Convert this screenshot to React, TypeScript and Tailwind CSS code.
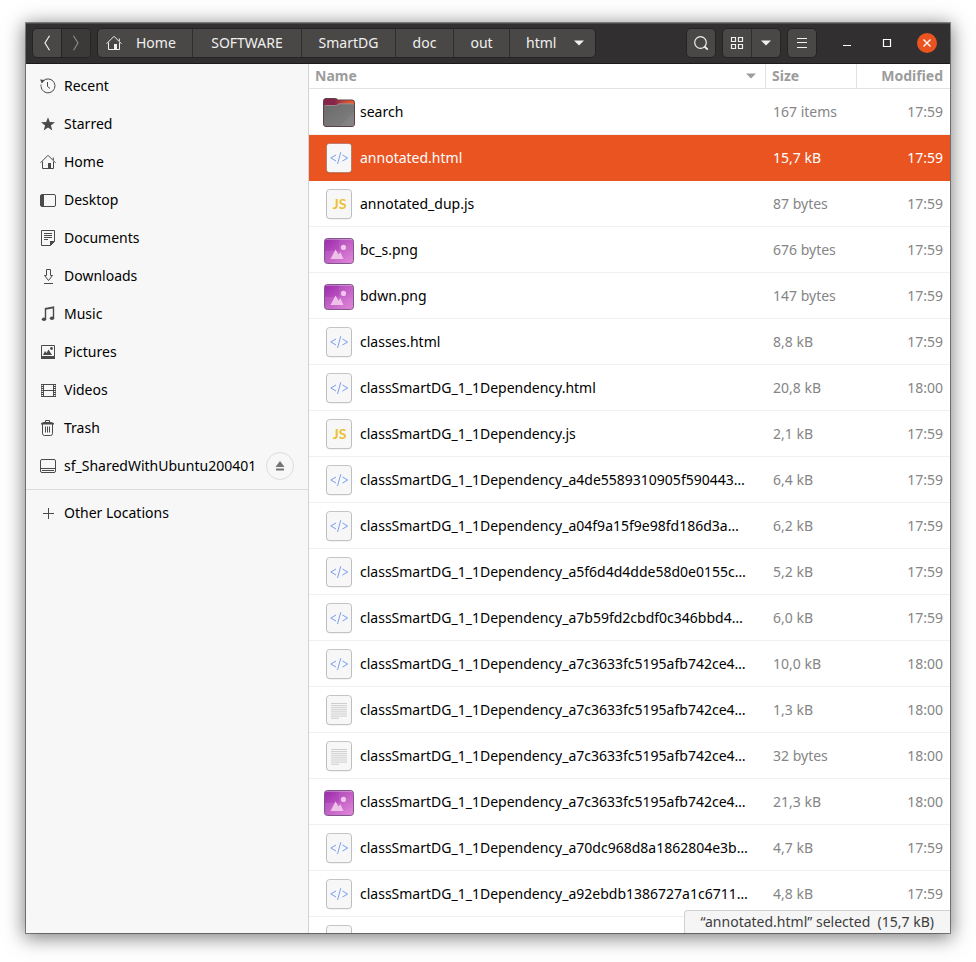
import React from "react";

type Kind = "folder" | "html" | "js" | "image" | "text";

interface FileEntry {
  name: string;
  kind: Kind;
  size: string;
  modified: string;
}

const files: FileEntry[] = [
  { name: "search", kind: "folder", size: "167 items", modified: "17:59" },
  { name: "annotated.html", kind: "html", size: "15,7 kB", modified: "17:59" },
  { name: "annotated_dup.js", kind: "js", size: "87 bytes", modified: "17:59" },
  { name: "bc_s.png", kind: "image", size: "676 bytes", modified: "17:59" },
  { name: "bdwn.png", kind: "image", size: "147 bytes", modified: "17:59" },
  { name: "classes.html", kind: "html", size: "8,8 kB", modified: "17:59" },
  { name: "classSmartDG_1_1Dependency.html", kind: "html", size: "20,8 kB", modified: "18:00" },
  { name: "classSmartDG_1_1Dependency.js", kind: "js", size: "2,1 kB", modified: "17:59" },
  { name: "classSmartDG_1_1Dependency_a4de5589310905f590443…", kind: "html", size: "6,4 kB", modified: "17:59" },
  { name: "classSmartDG_1_1Dependency_a04f9a15f9e98fd186d3a…", kind: "html", size: "6,2 kB", modified: "17:59" },
  { name: "classSmartDG_1_1Dependency_a5f6d4d4dde58d0e0155c…", kind: "html", size: "5,2 kB", modified: "17:59" },
  { name: "classSmartDG_1_1Dependency_a7b59fd2cbdf0c346bbd4…", kind: "html", size: "6,0 kB", modified: "17:59" },
  { name: "classSmartDG_1_1Dependency_a7c3633fc5195afb742ce4…", kind: "html", size: "10,0 kB", modified: "18:00" },
  { name: "classSmartDG_1_1Dependency_a7c3633fc5195afb742ce4…", kind: "text", size: "1,3 kB", modified: "18:00" },
  { name: "classSmartDG_1_1Dependency_a7c3633fc5195afb742ce4…", kind: "text", size: "32 bytes", modified: "18:00" },
  { name: "classSmartDG_1_1Dependency_a7c3633fc5195afb742ce4…", kind: "image", size: "21,3 kB", modified: "18:00" },
  { name: "classSmartDG_1_1Dependency_a70dc968d8a1862804e3b…", kind: "html", size: "4,7 kB", modified: "17:59" },
  { name: "classSmartDG_1_1Dependency_a92ebdb1386727a1c6711…", kind: "html", size: "4,8 kB", modified: "17:59" },
  { name: "", kind: "html", size: "", modified: "" },
];

function FileIcon({ kind }: { kind: Kind }) {
  const id = React.useId();
  if (kind === "folder") {
    return (
      <svg width="34" height="32" viewBox="0 0 34 32" className="shrink-0" aria-hidden="true">
        <defs>
          <linearGradient id={id} x1="0" y1="0" x2="1" y2="0">
            <stop offset="0.35" stopColor="#86254a" />
            <stop offset="0.75" stopColor="#d9502f" />
            <stop offset="1" stopColor="#ea5b26" />
          </linearGradient>
          <linearGradient id={id + "f"} x1="0" y1="0" x2="1" y2="1">
            <stop offset="0" stopColor="#6a6a6a" />
            <stop offset="1" stopColor="#818181" />
          </linearGradient>
        </defs>
        <path d="M1.500 5A2.500 2.500 0 0 1 4 2.500h9.500c1.300 0 1.800 1.500 3 1.500H30a2.500 2.500 0 0 1 2.500 2.500V28a2.500 2.500 0 0 1-2.500 2.500H4A2.500 2.500 0 0 1 1.500 28z" fill={"url(#" + id + ")"} stroke="#5e4048" />
        <path d="M2 11a1.500 1.500 0 0 1 1.500-1.500h10c1.700 0 2.300-1.700 4-1.700h13A1.500 1.500 0 0 1 32 9.300V28a2 2 0 0 1-2 2H4a2 2 0 0 1-2-2z" fill={"url(#" + id + "f)"} />
        <path d="M2.300 10.200c.3-.5.600-.7 1.300-.7h9.900c1.700 0 2.300-1.700 4-1.700h12.800c.7 0 1 .2 1.300.7" fill="none" stroke="#a8989b" strokeWidth="0.800" />
        <path d="M18 30 32 16v12a2 2 0 0 1-2 2z" fill="#fff" opacity="0.050" />
      </svg>
    );
  }
  if (kind === "image") {
    return (
      <svg width="34" height="32" viewBox="0 0 34 32" className="shrink-0" aria-hidden="true">
        <defs>
          <linearGradient id={id} x1="0" y1="0" x2="1" y2="1">
            <stop offset="0" stopColor="#9a2bac" />
            <stop offset="1" stopColor="#e07bd6" />
          </linearGradient>
        </defs>
        <rect x="2.500" y="4.500" width="29" height="25" rx="3" fill={"url(#" + id + ")"} stroke="#80568c" />
        <path d="M17 5h12a2.500 2.500 0 0 1 2.500 2.500V17H17z" fill="#fff" opacity="0.070" />
        <path d="M3 17h28v10a2 2 0 0 1-2 2H5a2 2 0 0 1-2-2z" fill="#fff" opacity="0.100" />
        <path d="M4 5.500h26" stroke="#fff" opacity="0.300" />
        <circle cx="21.500" cy="13.400" r="2.600" fill="#f0c4ec" />
        <path d="m8.500 25 5-9.500 3.200 5.300 1.600-2.800L21.500 25z" fill="#efc0ea" />
      </svg>
    );
  }
  return (
    <svg width="34" height="32" viewBox="0 0 34 32" className="shrink-0" aria-hidden="true">
      <rect x="4.500" y="2" width="25" height="29" rx="3.500" fill="none" stroke="#000" strokeOpacity="0.100" />
      <rect x="4.500" y="1.500" width="25" height="29" rx="3" fill="#f7f7f7" stroke="#000" strokeOpacity="0.200" />
      {kind === "html" && (
        <path d="m14 13-5.200 3 5.200 3M20.500 13l5.200 3-5.200 3M18.800 10.200l-3.300 11.800" fill="none" stroke="#789ff0" />
      )}
      {kind === "js" && (
        <text x="17.500" y="20.500" textAnchor="middle" fontSize="14" fontWeight="700" fill="#ecc02e" className="font-['Lato',sans-serif]">
          JS
        </text>
      )}
      {kind === "text" && (
        <path d="M9 9.500h16M9 11.600h16M9 13.700h16M9 15.800h16M9 17.900h16M9 20h16M9 22.100h16M9 24.200h8" stroke="#c8c8c8" strokeWidth="0.900" />
      )}
    </svg>
  );
}

function HomeIcon() {
  return (
    <svg width="16" height="16" viewBox="0 0 16 16" fill="none" stroke="currentColor" className="shrink-0" aria-hidden="true">
      <path d="M.5 8.800 8 1.300l7.500 7.500M2.500 7.500v7h11v-7M13.300 6V3.500" />
      <path d="M8 9h3v5.500H8z" fill="currentColor" stroke="none" />
    </svg>
  );
}

function Glyph({ children }: { children: React.ReactNode }) {
  return (
    <svg width="16" height="16" viewBox="0 0 16 16" fill="none" stroke="currentColor" className="shrink-0" aria-hidden="true">
      {children}
    </svg>
  );
}

const places: { label: string; icon: React.ReactNode; mount?: boolean }[] = [
  {
    label: "Recent",
    icon: (
      <Glyph>
        <path d="M3.200 2.800A7 7 0 1 1 1 8.300" />
        <path d="M1 8a7 7 0 0 1 2.200-5.200" strokeDasharray="1.500 1.500" />
        <path d="M0 1.500 4.800 2 2 5.200z" fill="currentColor" stroke="none" />
        <path d="M7.500 4v4.500l2.500 2" />
      </Glyph>
    ),
  },
  {
    label: "Starred",
    icon: (
      <Glyph>
        <path d="m8 1.200 1.800 4.800 5.200.2-4.100 3.200 1.400 5L8 11.500l-4.300 2.900 1.400-5L1 6.200 6.200 6z" fill="currentColor" stroke="none" />
      </Glyph>
    ),
  },
  { label: "Home", icon: <HomeIcon /> },
  {
    label: "Desktop",
    icon: (
      <Glyph>
        <rect x="0.500" y="2.500" width="15" height="12" rx="1.500" />
        <path d="M1 3h3v11H1z" fill="currentColor" stroke="none" />
      </Glyph>
    ),
  },
  {
    label: "Documents",
    icon: (
      <Glyph>
        <path d="M1.500.5h13v11l-4 4h-9z" />
        <path d="M10 11h5l-5 5zM4 3h8v1H4zM4 5h8v1H4zM4 7h8v1H4zM4 9h4v1H4z" fill="currentColor" stroke="none" />
      </Glyph>
    ),
  },
  {
    label: "Downloads",
    icon: (
      <Glyph>
        <path d="M6.500 1.500h4v6h2l-4 5-4-5h2zM4 15.500h9" />
      </Glyph>
    ),
  },
  {
    label: "Music",
    icon: (
      <Glyph>
        <path d="M5.500 13V2.500l8-1.500v11M5.500 3l8-1.500" strokeWidth="1.400" />
        <ellipse cx="4" cy="13.300" rx="2.200" ry="1.800" fill="currentColor" stroke="none" />
        <ellipse cx="12" cy="12.300" rx="2.200" ry="1.800" fill="currentColor" stroke="none" />
      </Glyph>
    ),
  },
  {
    label: "Pictures",
    icon: (
      <Glyph>
        <path d="M1.500 1.500h13v12h-13z" />
        <path d="M1 12h14v3H1zM3 11l2-4 1.500 2L8.500 5.500 12 11z" fill="currentColor" stroke="none" />
        <circle cx="11.500" cy="4.500" r="1.400" fill="currentColor" stroke="none" />
      </Glyph>
    ),
  },
  {
    label: "Videos",
    icon: (
      <Glyph>
        <path d="M3.500 2v13M13.500 2v13M3 2.500h11M3 8.500h11M3 14.500h11" />
        <path d="M2 2v13M15 2v13" strokeWidth="2" strokeDasharray="1 1" />
        <path d="M1.500 2v13M15.500 2v13" strokeWidth="0.600" />
      </Glyph>
    ),
  },
  {
    label: "Trash",
    icon: (
      <Glyph>
        <path d="M2.500 4v9.500a2 2 0 0 0 2 2h6a2 2 0 0 0 2-2V4M5.500 6.500v6M7.500 6.500v6M9.500 6.500v6M5.500 2V.5h4V2" />
        <path d="M1 4.500V3.500C2 2.500 3 2 5 2h5c2 0 3 .5 4 1.500v1z" fill="currentColor" stroke="none" />
      </Glyph>
    ),
  },
  {
    label: "sf_SharedWithUbuntu200401",
    mount: true,
    icon: (
      <Glyph>
        <rect x="0.500" y="1.500" width="15" height="13" rx="1.500" />
        <path d="M1 10.500h14M2 12.500h12" />
      </Glyph>
    ),
  },
];

function Place({ label, icon }: { label: string; icon: React.ReactNode }) {
  return (
    <a href="#" className="flex min-w-0 items-center gap-2 whitespace-nowrap">
      <span className="text-[#4a4a4a]">{icon}</span>
      {label}
    </a>
  );
}

function Caret() {
  return (
    <svg width="10" height="6" viewBox="0 0 10 6" aria-hidden="true" className="shrink-0">
      <path d="M0 .5h10L5 5.500z" fill="currentColor" />
    </svg>
  );
}

const group = "flex h-[30px] shrink-0 overflow-hidden rounded-[5px] border border-[#252324] bg-[#4a4846] text-[#f0f0f0]";
const square = "flex w-7 items-center justify-center";
const crumb = "flex items-center justify-center border-l border-[#302e2e]";

export default function App() {
  return (
    <div className="h-screen bg-white px-[26px] pt-[23px] pb-[29px] font-['Noto_Sans','Open_Sans',sans-serif] text-sm text-black">
      <main className="flex h-full flex-col overflow-hidden bg-white shadow-[0_0_0_1px_rgba(0,0,0,0.4),0_3px_18px_2px_rgba(0,0,0,0.5)]">
        <header className="flex h-[41px] shrink-0 items-center border-t border-b border-t-[#4d4b4b] border-b-[#1c1a1b] bg-[#322f30] pb-px pl-1.5">
          <div className={group}>
            <button aria-label="Back" className={square}>
              <svg width="8" height="16" viewBox="0 0 8 16" fill="none" stroke="currentColor" strokeWidth="1.200" aria-hidden="true">
                <path d="M6.500.8 2 8l4.500 7.200" />
              </svg>
            </button>
            <button aria-label="Forward" className="flex w-[29px] items-center justify-center border-l border-[#252324] bg-[#3c3a39] text-[#8b8988]">
              <svg width="8" height="16" viewBox="0 0 8 16" fill="none" stroke="currentColor" strokeWidth="1.200" aria-hidden="true">
                <path d="M1.500.8 6 8l-4.500 7.200" />
              </svg>
            </button>
          </div>
          <nav aria-label="Path" className="ml-1.5 flex">
            <div className={group}>
              <button className="flex w-[94px] items-center gap-3.5 pl-2">
                <HomeIcon />
                Home
              </button>
              <button className={crumb + " w-[109px]"}>SOFTWARE</button>
              <button className={crumb + " w-[94px]"}>SmartDG</button>
              <button className={crumb + " w-[58px]"}>doc</button>
              <button className={crumb + " w-[56px]"}>out</button>
              <button className="flex w-[86px] items-center justify-between border-l border-[#302e2e] pr-[11px] pl-4">
                html
                <Caret />
              </button>
            </div>
          </nav>
          <div className="ml-auto flex gap-1.5">
            <div className={group}>
              <button aria-label="Search" className={square}>
                <Glyph>
                  <circle cx="7.500" cy="7.500" r="5.800" strokeWidth="1.200" />
                  <path d="m11.500 11.500 3.200 3.200" strokeWidth="1.800" />
                </Glyph>
              </button>
            </div>
            <div className={group}>
              <button aria-label="Icon view" className={square}>
                <Glyph>
                  <path d="M2.500 2.500h4v4h-4zM9.500 2.500h4v4h-4zM2.500 9.500h4v4h-4zM9.500 9.500h4v4h-4z" strokeWidth="1.200" />
                </Glyph>
              </button>
              <button aria-label="View options" className="flex w-[29px] items-center justify-center border-l border-[#302e2e]">
                <Caret />
              </button>
            </div>
            <div className={group}>
              <button aria-label="Menu" className={square}>
                <Glyph>
                  <path d="M3 3.500h10M3 7.500h10M3 12.500h10" strokeWidth="1.200" />
                </Glyph>
              </button>
            </div>
          </div>
          <div className="mr-[13px] ml-5 flex shrink-0 items-center gap-5 text-white">
            <button aria-label="Minimize" className="flex size-5 items-center justify-center">
              <Glyph>
                <path d="M4 10.500h8" />
              </Glyph>
            </button>
            <button aria-label="Maximize" className="flex size-5 items-center justify-center">
              <Glyph>
                <path d="M4.500 4.500h7v7h-7z" strokeWidth="1.200" />
              </Glyph>
            </button>
            <button aria-label="Close" className="flex size-5 items-center justify-center rounded-full bg-[#e95420]">
              <Glyph>
                <path d="m4.500 4.500 7 7M11.500 4.500l-7 7" strokeWidth="1.400" />
              </Glyph>
            </button>
          </div>
        </header>

        <div className="flex min-h-0 flex-1">
          <aside className="w-[283px] shrink-0 border-r border-[#d3d3d3] bg-[#f7f7f7]">
            <ul className="border-b border-[#dcdcdc] pt-[3px] pb-1">
              {places.map((p) => (
                <li key={p.label} className="flex h-[38px] items-center justify-between pr-3.5 pl-3.5">
                  <Place label={p.label} icon={p.icon} />
                  {p.mount && (
                    <button aria-label="Eject" className="flex size-7 shrink-0 items-center justify-center rounded-full border border-[#dcdcdc] text-[#737373]">
                      <svg width="10" height="10" viewBox="0 0 10 10" fill="currentColor" aria-hidden="true">
                        <path d="M5 0 9.500 6h-9zM1 7.500h8v2H1z" />
                      </svg>
                    </button>
                  )}
                </li>
              ))}
            </ul>
            <div className="flex h-[46px] items-center pl-3.5">
              <Place
                label="Other Locations"
                icon={
                  <Glyph>
                    <path d="M8.500 3v11M3 8.500h11" />
                  </Glyph>
                }
              />
            </div>
          </aside>

          <section className="relative min-w-0 flex-1 overflow-hidden">
            <table className="w-full table-fixed border-separate border-spacing-0">
              <thead>
                <tr className="h-[25px] text-left text-[#9c9c9c]">
                  <th className="border-b border-[#e2e2e2] p-0 pr-[9px] pl-1.5">
                    <button className="flex w-full items-center justify-between font-bold">
                      Name
                      <Caret />
                    </button>
                  </th>
                  <th className="w-[91px] border-b border-l border-[#e2e2e2] p-0 pl-1.5 font-bold">Size</th>
                  <th className="w-[94px] border-b border-l border-[#e2e2e2] p-0 pr-[7px] text-right font-bold">Modified</th>
                </tr>
              </thead>
              <tbody>
                {files.map((f, i) => {
                  const selected = i === 1;
                  const cell = selected
                    ? "h-[46px] border-b border-[#e95420] p-0 pt-px"
                    : "h-[46px] border-b border-[#f0f0f0] p-0 pt-px";
                  return (
                    <tr key={i} aria-selected={selected} className={selected ? "bg-[#e95420] text-white" : "bg-white"}>
                      <td className={cell + " pl-[13px]"}>
                        <div className="flex items-center gap-1 whitespace-nowrap">
                          <FileIcon kind={f.kind} />
                          {f.name}
                        </div>
                      </td>
                      <td className={cell + " pl-2 whitespace-nowrap" + (selected ? "" : " text-[#858585]")}>{f.size}</td>
                      <td className={cell + " pr-[7px] text-right" + (selected ? "" : " text-[#858585]")}>{f.modified}</td>
                    </tr>
                  );
                })}
              </tbody>
            </table>
            <p className="absolute right-0 bottom-0 h-[23px] rounded-tl-[4px] border-t border-l border-[#d0d0d0] bg-[#f5f5f5] px-4 leading-[22px] whitespace-pre text-[#3d3d3d]">
              {"“annotated.html” selected  (15,7 kB)"}
            </p>
          </section>
        </div>
      </main>
    </div>
  );
}
